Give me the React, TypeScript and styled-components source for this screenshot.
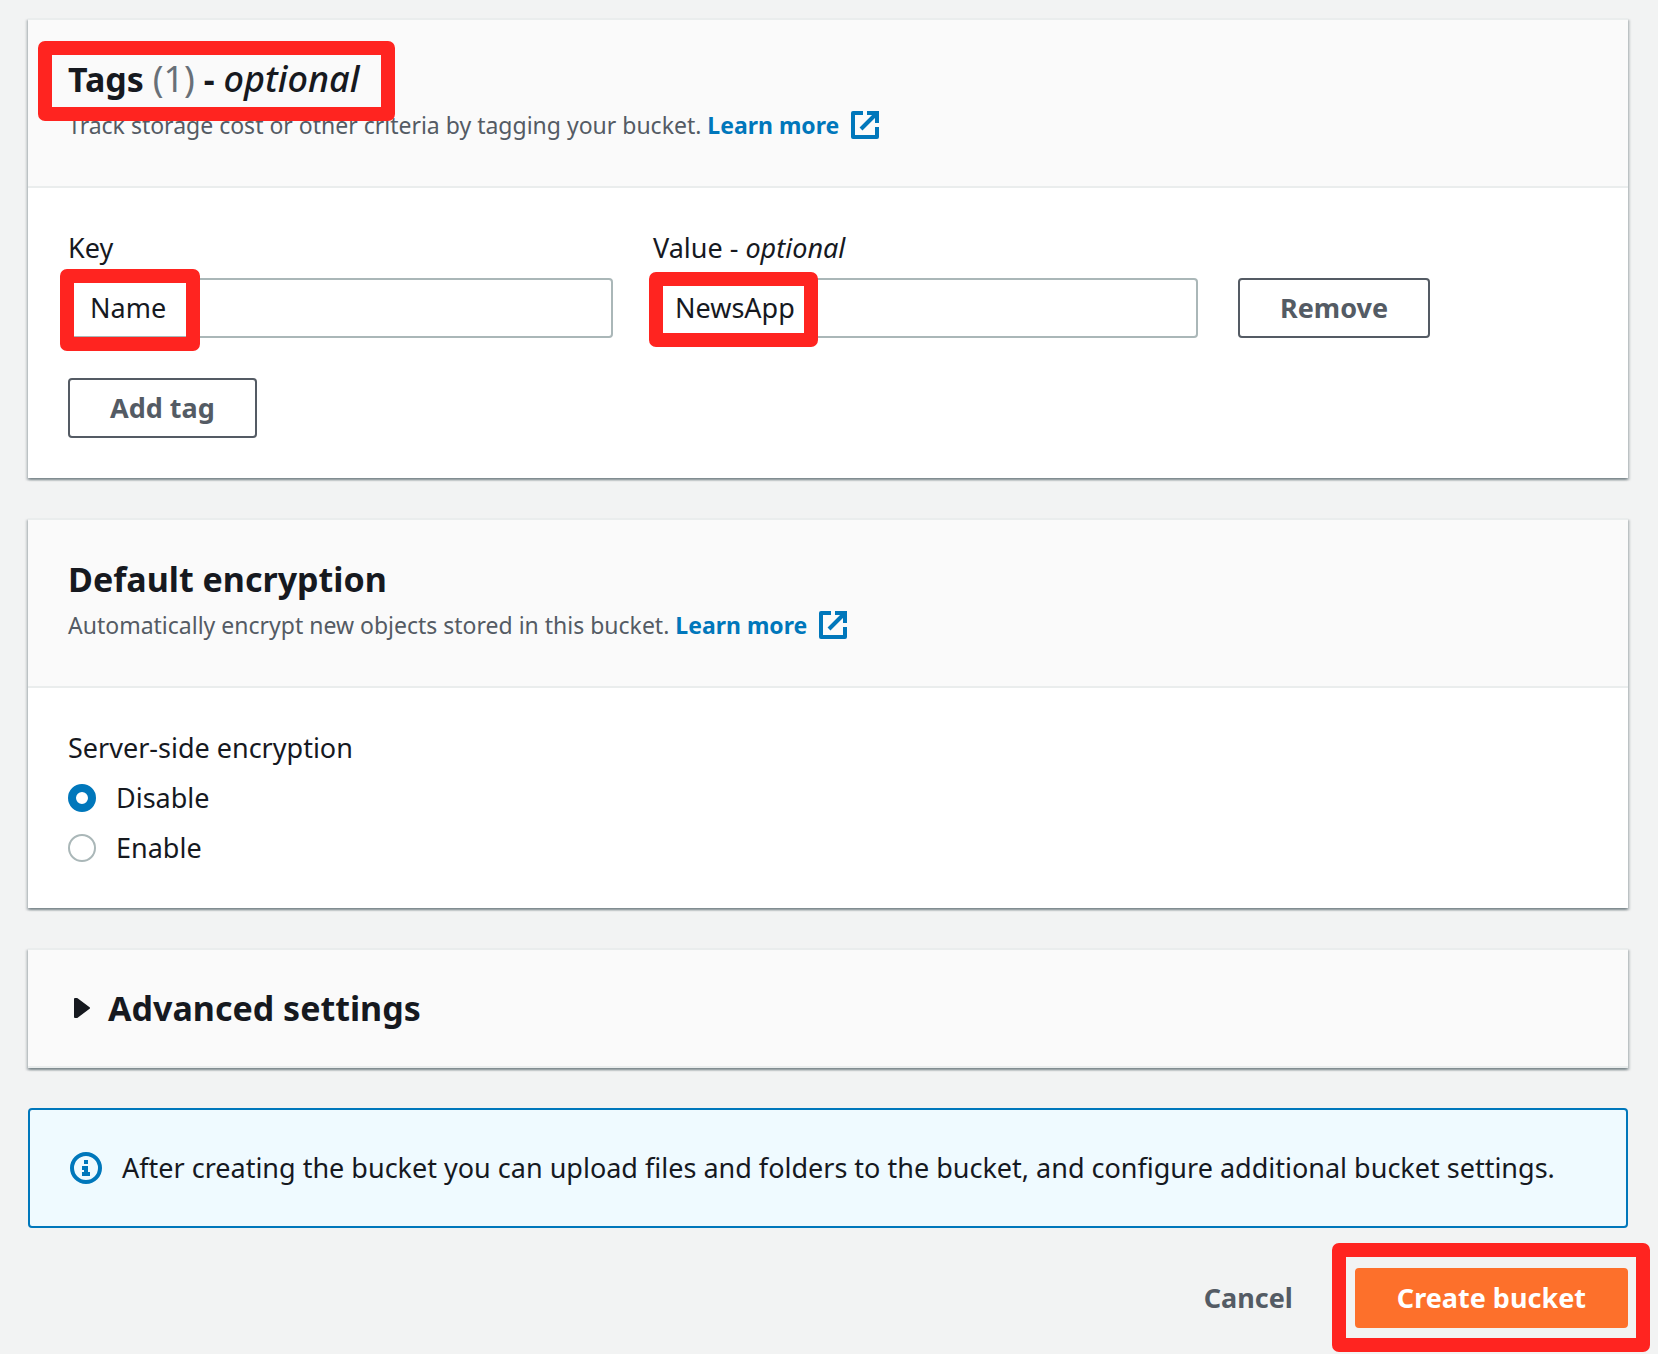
import React, { useState } from "react";
import styled, { createGlobalStyle, css } from "styled-components";

const color = {
  page: "#f2f3f3",
  headerBg: "#fafafa",
  divider: "#eaeded",
  text: "#16191f",
  secondary: "#545b64",
  muted: "#687078",
  fieldBorder: "#aab7b8",
  link: "#0077bb",
  infoBg: "#effaff",
  orange: "#fd702b",
  highlight: "#ff2420",
};

const GlobalStyle = createGlobalStyle`
  *, *::before, *::after {
    box-sizing: border-box;
  }
  body {
    margin: 0;
    background: ${color.page};
    color: ${color.text};
    font-family: "Noto Sans", "Open Sans", sans-serif;
    font-size: 27px;
    line-height: 44px;
  }
  button, input {
    font: inherit;
    color: inherit;
  }
`;

const Page = styled.form`
  display: flex;
  flex-direction: column;
  gap: 40px;
  padding: 18px 30px 26px 28px;
`;

const Panel = styled.section`
  background: #fff;
  border-top: 2px solid ${color.divider};
  box-shadow:
    0 2px 2px 0 rgba(0, 28, 36, 0.3),
    2px 2px 2px 0 rgba(0, 28, 36, 0.15),
    -2px 2px 2px 0 rgba(0, 28, 36, 0.15);
`;

const PanelHeader = styled.header`
  display: flex;
  flex-direction: column;
  align-items: flex-start;
  gap: 2px;
  padding: 37px 40px 39px;
  background: ${color.headerBg};
  border-bottom: 2px solid ${color.divider};
`;

const PanelBody = styled.div`
  padding: 40px;
`;

const headingText = css`
  font-size: 34px;
  font-weight: 700;
  line-height: 44px;
`;

const Title = styled.h2`
  ${headingText}
  position: relative;
  margin: 0;
`;

const Counter = styled.span`
  font-size: 36px;
  font-weight: 400;
  line-height: 1;
  color: ${color.muted};
`;

const TitleNote = styled.em`
  font-size: 36px;
  font-weight: 500;
  line-height: 1;
`;

const Description = styled.p`
  margin: 0;
  font-size: 23px;
  color: ${color.secondary};
`;

const Link = styled.a`
  display: inline-flex;
  align-items: center;
  gap: 12px;
  font-weight: 700;
  color: ${color.link};
  text-decoration: none;
`;

const Highlight = styled.span<{ $left: number; $top: number; $width: number; $height: number }>`
  position: absolute;
  z-index: 1;
  left: ${(p) => p.$left}px;
  top: ${(p) => p.$top}px;
  width: ${(p) => p.$width}px;
  height: ${(p) => p.$height}px;
  border: 14px solid ${color.highlight};
  border-radius: 7px;
  pointer-events: none;
`;

const TagRow = styled.div`
  display: grid;
  grid-template-columns: 109fr 109fr 70fr;
  align-items: end;
  gap: 40px;
  margin-bottom: 40px;
`;

const Field = styled.div`
  display: flex;
  flex-direction: column;
  gap: 10px;
  min-width: 0;
`;

const FieldLabel = styled.label`
  line-height: 40px;
`;

const Control = styled.div`
  position: relative;
  display: flex;
`;

const TextInput = styled.input`
  width: 100%;
  height: 60px;
  padding: 0 20px 2px;
  border: 2px solid ${color.fieldBorder};
  border-radius: 4px;
  background: #fff;
`;

const Button = styled.button<{ $variant: "normal" | "primary" | "link" }>`
  height: 60px;
  padding: 0 40px;
  border: 2px solid transparent;
  border-radius: 4px;
  font-weight: 700;
  line-height: 44px;
  white-space: nowrap;
  cursor: pointer;
  background: transparent;
  color: ${color.secondary};
  ${(p) => p.$variant === "normal" && css`
    background: #fff;
    border-color: ${color.secondary};
  `}
  ${(p) => p.$variant === "primary" && css`
    background: ${color.orange};
    border-color: ${color.orange};
    color: #fff;
  `}
`;

const RadioGroup = styled.fieldset`
  display: flex;
  flex-direction: column;
  gap: 10px;
  margin: 0;
  padding: 0;
  border: 0;
`;

const Legend = styled.legend`
  padding: 0 0 10px;
  line-height: 40px;
`;

const RadioLabel = styled.label`
  display: flex;
  align-items: center;
  gap: 20px;
  line-height: 40px;
`;

const Radio = styled.input`
  appearance: none;
  width: 28px;
  height: 28px;
  margin: 0;
  border: 2px solid ${color.fieldBorder};
  border-radius: 50%;
  background: #fff;

  &:checked {
    border: 8px solid ${color.link};
  }
`;

const ExpandHeader = styled.h2`
  margin: 0;
  background: ${color.headerBg};
  border-bottom: 2px solid ${color.divider};
`;

const ExpandButton = styled.button`
  ${headingText}
  display: flex;
  align-items: center;
  gap: 18px;
  width: 100%;
  padding: 36px 40px 36px 46px;
  border: 0;
  background: transparent;
  text-align: left;
  cursor: pointer;
`;

const Alert = styled.div`
  display: flex;
  align-items: center;
  gap: 20px;
  padding: 36px 40px;
  background: ${color.infoBg};
  border: 2px solid ${color.link};
  border-radius: 4px;
`;

const Actions = styled.div`
  display: flex;
  justify-content: flex-end;
  gap: 20px;
`;

const Icon = styled.svg`
  flex: none;
  display: block;
`;

function ExternalIcon() {
  return (
    <Icon width="28" height="28" viewBox="0 0 28 28" fill="none" stroke={color.link} strokeWidth="4" aria-hidden="true">
      <path d="M12 2H2V26H26V16" strokeLinejoin="round" />
      <path d="M16 2H26V12" />
      <path d="M25 3L10 18" />
    </Icon>
  );
}

function InfoIcon() {
  return (
    <Icon width="32" height="32" viewBox="0 0 32 32" aria-hidden="true">
      <circle cx="16" cy="16" r="14" fill="none" stroke={color.link} strokeWidth="4" />
      <path d="M14 8H18V12H14ZM12 14H18V20H20V24H12V20H14V18H12Z" fill={color.link} />
    </Icon>
  );
}

function CaretIcon() {
  return (
    <Icon width="16" height="20" viewBox="0 0 16 20" aria-hidden="true">
      <path d="M1 1H3L15 10L3 19H1Z" fill={color.text} stroke={color.text} strokeWidth="2" strokeLinejoin="round" />
    </Icon>
  );
}

function LearnMore() {
  return (
    <Link href="#">
      Learn more
      <ExternalIcon />
    </Link>
  );
}

export default function App() {
  const [tagKey, setTagKey] = useState("Name");
  const [tagValue, setTagValue] = useState("NewsApp");
  const [encryption, setEncryption] = useState("disable");

  return (
    <>
      <GlobalStyle />
      <Page onSubmit={(e) => e.preventDefault()}>
        <Panel>
          <PanelHeader>
            <Title>
              Tags <Counter>(1)</Counter> - <TitleNote>optional</TitleNote>
              <Highlight $left={-30} $top={-16} $width={357} $height={80} />
            </Title>
            <Description>
              Track storage cost or other criteria by tagging your bucket. <LearnMore />
            </Description>
          </PanelHeader>
          <PanelBody>
            <TagRow>
              <Field>
                <FieldLabel htmlFor="tag-key">Key</FieldLabel>
                <Control>
                  <TextInput id="tag-key" value={tagKey} onChange={(e) => setTagKey(e.target.value)} />
                  <Highlight $left={-8} $top={-9} $width={140} $height={82} />
                </Control>
              </Field>
              <Field>
                <FieldLabel htmlFor="tag-value">
                  Value - <em>optional</em>
                </FieldLabel>
                <Control>
                  <TextInput id="tag-value" value={tagValue} onChange={(e) => setTagValue(e.target.value)} />
                  <Highlight $left={-4} $top={-6} $width={169} $height={75} />
                </Control>
              </Field>
              <Control>
                <Button type="button" $variant="normal">Remove</Button>
              </Control>
            </TagRow>
            <Control>
              <Button type="button" $variant="normal">Add tag</Button>
            </Control>
          </PanelBody>
        </Panel>

        <Panel>
          <PanelHeader>
            <Title>Default encryption</Title>
            <Description>
              Automatically encrypt new objects stored in this bucket. <LearnMore />
            </Description>
          </PanelHeader>
          <PanelBody>
            <RadioGroup>
              <Legend>Server-side encryption</Legend>
              <RadioLabel>
                <Radio
                  type="radio"
                  name="encryption"
                  checked={encryption === "disable"}
                  onChange={() => setEncryption("disable")}
                />
                Disable
              </RadioLabel>
              <RadioLabel>
                <Radio
                  type="radio"
                  name="encryption"
                  checked={encryption === "enable"}
                  onChange={() => setEncryption("enable")}
                />
                Enable
              </RadioLabel>
            </RadioGroup>
          </PanelBody>
        </Panel>

        <Panel>
          <ExpandHeader>
            <ExpandButton type="button" aria-expanded="false">
              <CaretIcon />
              Advanced settings
            </ExpandButton>
          </ExpandHeader>
        </Panel>

        <Alert role="status">
          <InfoIcon />
          After creating the bucket you can upload files and folders to the bucket, and configure additional bucket settings.
        </Alert>

        <Actions>
          <Button type="button" $variant="link">Cancel</Button>
          <Control>
            <Button type="submit" $variant="primary">Create bucket</Button>
            <Highlight $left={-23} $top={-25} $width={318} $height={109} />
          </Control>
        </Actions>
      </Page>
    </>
  );
}
